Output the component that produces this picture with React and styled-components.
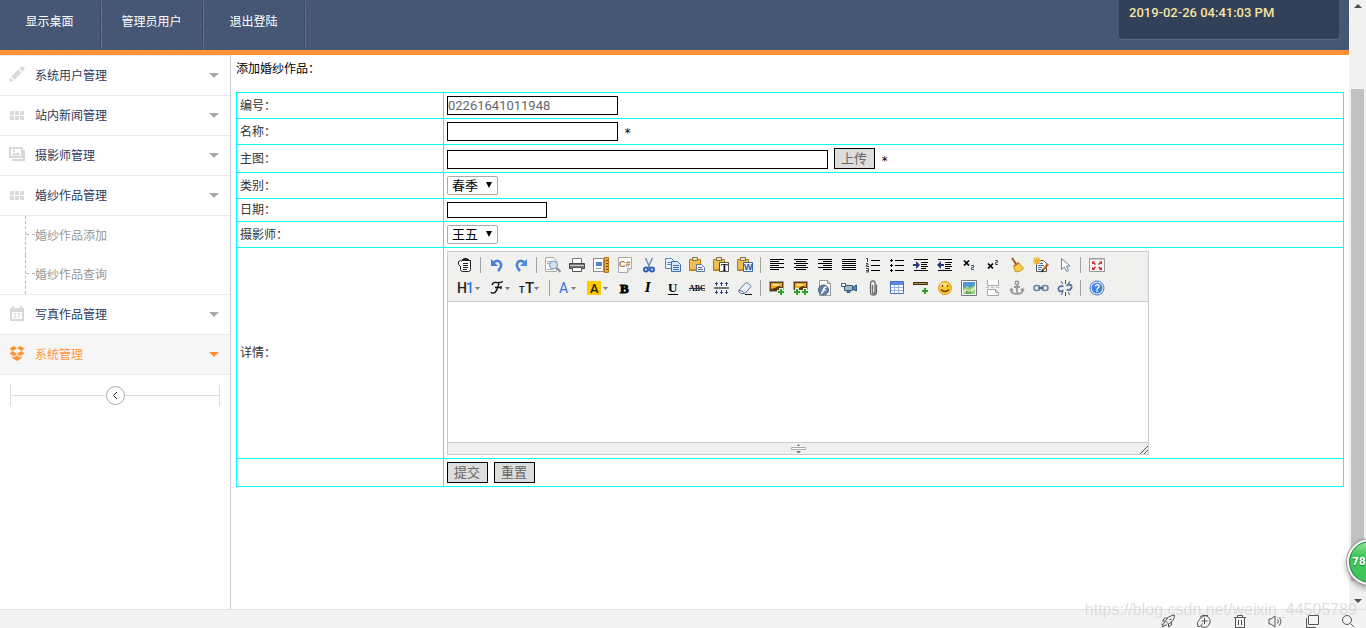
import React from 'react';
import styled, { createGlobalStyle, css } from 'styled-components';

const GlobalStyle = createGlobalStyle`
  * {
    box-sizing: border-box;
  }
  body {
    margin: 0;
    overflow: hidden;
    background: #fff;
    font-family: "Liberation Sans", "Noto Sans CJK SC", sans-serif;
    font-size: 12px;
    color: #333;
  }
  button, input, select, textarea {
    font-family: inherit;
    margin: 0;
  }
  ul {
    list-style: none;
    margin: 0;
    padding: 0;
  }
`;

// Page shell
const Shell = styled.div`
  display: flex;
  flex-direction: column;
  height: 100vh;
  overflow: hidden;
`;

const Viewport = styled.div`
  display: flex;
  flex: 1;
  min-height: 0;
`;

const Page = styled.div`
  display: flex;
  flex-direction: column;
  flex: 1;
  min-width: 0;
`;

// Header
const Header = styled.header`
  display: flex;
  justify-content: space-between;
  height: 55px;
  border-bottom: 5px solid #ff9334;
  background-color: #445674;
  background-image: repeating-linear-gradient(
    135deg,
    rgba(255, 255, 255, 0.03) 0 1px,
    transparent 1px 2px,
    rgba(20, 30, 60, 0.04) 2px 3px
  );
`;

const Nav = styled.nav`
  display: flex;
`;

const NavLink = styled.a`
  width: 102px;
  padding: 13px 2px 0 0;
  border-right: 1px solid #5d6e8c;
  box-shadow: inset -1px 0 0 #3a4a67;
  color: #fff;
  line-height: 18px;
  text-align: center;
  text-decoration: none;
`;

const Clock = styled.div`
  width: 220px;
  height: 39px;
  margin-right: 10px;
  padding: 3px 10px;
  border-radius: 0 0 3px 3px;
  background: #324059;
  box-shadow: 0 1px 0 #56678a;
  color: #f5e3a1;
  font-family: Roboto, sans-serif;
  font-size: 13px;
  font-weight: 500;
  line-height: 20px;
`;

const Columns = styled.div`
  display: flex;
  flex: 1;
  min-height: 0;
`;

// Sidebar
const Sidebar = styled.aside`
  flex: none;
  width: 231px;
  border-right: 1px solid #ccc;
`;

const Menu = styled.ul`
  border-bottom: 1px solid #ebebeb;
`;

const MenuLink = styled.a`
  display: flex;
  align-items: center;
  gap: 10px;
  height: 40px;
  padding: 0 11px 3px 9px;
  border-top: 1px solid #ebebeb;
  background: ${(props) => (props.$active ? '#f6f6f6' : '#fff')};
  color: ${(props) => (props.$active ? '#ff9334' : '#2b3a5b')};
  text-decoration: none;

  svg {
    flex: none;
    color: ${(props) => (props.$active ? '#ff9334' : '#d8d8d8')};
  }
`;

const Caret = styled.i`
  margin-left: auto;
  margin-top: 3px;
  border: 5px solid transparent;
  border-top-color: ${(props) => (props.$active ? '#ff9334' : '#aaa')};
  border-bottom: 0;
`;

const SubMenu = styled.ul`
  border-top: 1px solid #ebebeb;
`;

const SubLink = styled.a`
  display: flex;
  align-items: center;
  height: 39px;
  margin-left: 25px;
  padding-bottom: 2px;
  border-left: 1px dashed #bbb;
  color: #999;
  text-decoration: none;

  &::before {
    content: '';
    width: 9px;
    border-top: 1px dashed #bbb;
  }
`;

const Collapse = styled.div`
  display: flex;
  align-items: center;
  height: 21px;
  margin: 10px;
  border: solid #ddd;
  border-width: 0 1px;

  &::before,
  &::after {
    content: '';
    flex: 1;
    height: 1px;
    background: #ddd;
  }
`;

const CollapseButton = styled.button`
  display: flex;
  align-items: center;
  justify-content: center;
  width: 19px;
  height: 19px;
  padding: 0;
  border: 1px solid #aaa;
  border-radius: 50%;
  background: #fff;
`;

// Form
const Content = styled.main`
  flex: 1;
  min-width: 0;
  padding: 6px 5px 5px;
`;

const Title = styled.h1`
  margin: 0 0 15px;
  color: #000;
  font-size: 12px;
  font-weight: 400;
  line-height: 16px;
`;

const FormTable = styled.table`
  width: 100%;
  table-layout: fixed;
  border-collapse: collapse;

  th,
  td {
    padding: 3px;
    border: 1px solid #0ff;
    font-weight: 400;
    text-align: left;
  }
  th {
    width: 18.7%;
    padding: 0 3px;
    line-height: 16px;
  }
`;

const Field = styled.div`
  display: flex;
  align-items: flex-end;
  gap: 6px;
`;

const Star = styled.span`
  color: #000;
  font-family: "DejaVu Sans Mono", monospace;
  line-height: 16px;
`;

const TextInput = styled.input`
  width: ${(props) => props.$width}px;
  height: ${(props) => props.$height || 19}px;
  padding: 0;
  border: 1px solid #000;
  border-radius: 0;
  background: #fff;
  color: #666;
  font-family: Roboto, "Noto Sans CJK SC", sans-serif;
  font-size: 13px;
  line-height: 16px;
`;

const FormButton = styled.button`
  height: 21px;
  padding: 0 7px 0 6px;
  border: 1px solid #000;
  border-radius: 0;
  background: #ddd;
  color: #666;
  font-size: 13px;
  line-height: 18px;
`;

const SelectBox = styled.div`
  display: grid;
  align-items: center;
  width: 51px;

  &::after {
    content: '';
    grid-area: 1 / 1;
    justify-self: end;
    margin: 0 6px 2px 0;
    border: 3px solid transparent;
    border-top: 6px solid #000;
    border-bottom: 0;
    pointer-events: none;
  }
`;

const Select = styled.select`
  grid-area: 1 / 1;
  width: 100%;
  height: 19px;
  padding: 1px 4px 0;
  appearance: none;
  border: 1px solid #a9a9a9;
  border-radius: 2px;
  background: #fff;
  color: #000;
  font-size: 13px;
  line-height: 16px;
`;

// Rich text editor
const EditorBox = styled.div`
  max-width: 702px;
  border: 1px solid #ccc;
`;

const Toolbar = styled.div`
  display: flex;
  flex-direction: column;
  gap: 1px;
  padding: 2px 5px;
  border-bottom: 1px solid #ccc;
  background: #f0f0ee;
`;

const ToolRow = styled.div`
  display: flex;
  align-items: center;
  height: 22px;
`;

const Tool = styled.button`
  display: flex;
  align-items: center;
  justify-content: center;
  flex: none;
  width: ${(props) => props.$width || 24}px;
  height: 20px;
  padding: 0;
  border: 0;
  background: none;
`;

const Separator = styled.i`
  width: 1px;
  height: 16px;
  margin: 0 4px 0 3px;
  background: #a0a0a0;
`;

const EditArea = styled.textarea`
  display: block;
  width: 100%;
  height: 140px;
  padding: 5px;
  border: 0;
  outline: 0;
  resize: none;
`;

const StatusBar = styled.div`
  display: grid;
  grid-template-columns: 1fr auto 1fr;
  align-items: end;
  height: 12px;
  border-top: 1px solid #ccc;
  background: #f0f0ee;

  svg:last-child {
    justify-self: end;
  }
`;

// Browser scrollbar and bottom bar
const ScrollTrack = styled.div`
  display: flex;
  flex-direction: column;
  align-items: center;
  flex: none;
  width: 17px;
  padding: 4px 0 6px;
  background: #f1f1f1;
`;

const ScrollArrow = styled.i`
  border: 4px solid transparent;
  ${(props) =>
    props.$up
      ? css`
          border-top: 0;
          border-bottom-color: #505050;
        `
      : css`
          border-bottom: 0;
          border-top-color: #505050;
        `}
`;

const ScrollThumb = styled.div`
  flex: 1;
  width: 13px;
  margin: 81px 0 18px;
  background: #c1c1c1;
`;

const BottomBar = styled.footer`
  display: flex;
  justify-content: flex-end;
  gap: 20px;
  height: 19px;
  padding: 3px 10px 0;
  border-top: 1px solid #e3e3e3;
  background: #f3f3f3;
  overflow: hidden;
`;

const BarButton = styled.button`
  flex: none;
  width: 16px;
  height: 16px;
  padding: 0;
  border: 0;
  background: none;
  color: #555;

  svg {
    display: block;
  }
`;

const SpeedBall = styled.div`
  position: fixed;
  right: -27px;
  bottom: 43px;
  width: 46px;
  height: 46px;
  padding-left: 3px;
  border: 2px solid #f2f2f2;
  border-radius: 50%;
  background: linear-gradient(#9be29b, #41c75a 35%, #3fc458);
  box-shadow: 0 0 0 1px #999, inset 0 0 0 1px #1f7d4d, 0 3px 6px rgba(0, 0, 0, 0.4);
  color: #fff;
  font: bold 10px/42px "DejaVu Sans", sans-serif;
  text-shadow: 0 1px 1px #1d7a35;
`;

const Watermark = styled.div`
  position: fixed;
  right: 9px;
  bottom: 8px;
  color: rgba(200, 200, 200, 0.55);
  font-size: 16px;
  line-height: 20px;
  pointer-events: none;
`;

const Svg = ({ w = 16, h = 16, children }) => (
  <svg width={w} height={h} viewBox={`0 0 ${w} ${h}`} fill="none" aria-hidden="true">
    {children}
  </svg>
);

// Sidebar icons
const menuIcons = {
  pencil: (
    <path
      fill="currentColor"
      d="M0 16l1.300-4.500 3.200 3.200zM2.300 10.500l7-7 3.200 3.200-7 7zM10.300 2.500l1.700-1.700q1-1 2 0l1.200 1.200q1 1 0 2l-1.700 1.700z"
    />
  ),
  grid: (
    <path fill="currentColor" d="M1 5h4v4H1zM6 5h4v4H6zM11 5h4v4h-4zM1 10h4v4H1zM6 10h4v4H6zM11 10h4v4h-4z" />
  ),
  photos: (
    <>
      <path stroke="currentColor" strokeWidth="2" d="M1 2h12v9H1zM3 14h12V4" />
      <path fill="currentColor" d="M3 9.500l2-3 2 1.500 2-2 2.500 3.500zM4 4h2v2H4z" />
    </>
  ),
  calendar: (
    <>
      <path stroke="currentColor" strokeWidth="2" d="M2 4h12v11H2z" />
      <path fill="currentColor" d="M1 3h14v4H1zM3 1h2v3H3zM11 1h2v3h-2z" />
      <text x="4" y="13" fontSize="7" fontWeight="bold" fill="currentColor">17</text>
    </>
  ),
  box: (
    <path
      fill="currentColor"
      d="M5 1l3 2.200-4.500 2.800L.5 3.600zM11 1l4.500 2.600-3 2.400L8 3.200zM.5 8.500l3-2.500L8 8.800l-3 2.400zM15.500 8.500l-3-2.500L8 8.800l3 2.400zM3 11.200l2 1.200 3-2.200 3 2.200 2-1.200v1.600L8 16l-5-3.200z"
    />
  ),
};

const dropArrow = (x) => <path fill="#777" d={`M${x} 7h5l-2.500 3z`} />;
const clipboard = (
  <>
    <path fill="#f0bd52" stroke="#b27a1c" d="M.5 2.500h11v11H.5z" />
    <path fill="#c98c2c" d="M1 12h6v1.500H1z" />
    <path fill="#ece6cc" stroke="#807040" d="M3.500.500h5v3h-5z" />
  </>
);
const picture = (
  <>
    <path fill="#5a3512" stroke="#a0a0a0" d="M.5 1.500h14v10H.5z" />
    <path fill="#f9a91c" d="M2 3h11v4l-4-1-3 2-4 1z" />
    <path fill="#fce38a" d="M4 4h6v2H4z" />
  </>
);
const plus = (x, y) => (
  <>
    <path stroke="#e4f5e0" strokeWidth="4" d={`M${x - 4} ${y}h8M${x} ${y - 4}v8`} />
    <path stroke="#2f9e2f" strokeWidth="2" d={`M${x - 3} ${y}h6M${x} ${y - 3}v6`} />
  </>
);
const sheet = <path fill="#f8f8f6" stroke="#999" d="M2.500.500h8l3 3v12h-11zM10.500.500v3h3" />;

// Editor toolbar icons, drawn on a 16px grid
const toolIcons = {
  source: (
    <>
      <path fill="#fff" stroke="#222" d="M4.500 3.500h9v9q0 2-2 2h-6q-2 0-2-2V9" />
      <path stroke="#222" d="M5 2.500h7M6.500 1.500h4M1.500 4.500l2-1 1 1M1.500 4.500v3l2 2M6 6.500h5M6 8.500h5M6 10.500h5M6 12.500h4" />
    </>
  ),
  undo: (
    <>
      <path stroke="#4a7fd6" strokeWidth="2.500" d="M4 6q4-4 7-1 3 4-2 9" />
      <path fill="#4a7fd6" d="M2 2v7h7z" />
    </>
  ),
  redo: (
    <>
      <path stroke="#4a7fd6" strokeWidth="2.500" d="M12 6Q8 2 5 5q-3 4 2 9" />
      <path fill="#4a8ee6" d="M14 2v7H7z" />
    </>
  ),
  preview: (
    <>
      <path fill="#fafafa" stroke="#aaa" d="M.5.500h8l3 3v11H.5zM2 4.500h4M2 6.500h3M2 12.500h6" />
      <circle cx="8.500" cy="8" r="4" fill="#cfe2f6" stroke="#7893b5" />
      <path stroke="#8d8d9a" strokeWidth="2" d="M12 11l3.500 4" />
    </>
  ),
  print: (
    <>
      <path fill="#fff" stroke="#777" d="M3.500 1.500h9v5h-9z" />
      <path fill="#777" stroke="#444" d="M.5 6.500h15v5H.5z" />
      <path stroke="#ccc" d="M1 8.500h14" />
      <path fill="#fff" stroke="#555" d="M3.500 10.500h9v4h-9z" />
    </>
  ),
  template: (
    <>
      <path fill="#fff" stroke="#222" strokeDasharray="1 1" d="M.5 1.500h10v13H.5z" />
      <path fill="#4d86cc" d="M3 5h6v4H3z" />
      <path stroke="#999" d="M3 11.500h5" />
      <path fill="#e9a93a" stroke="#b87717" d="M11.500.500h4v15h-4z" />
      <path stroke="#7a4b08" d="M13 3.500h2M13 6.500h2M13 9.500h2M13 12.500h2" />
    </>
  ),
  code: (
    <>
      <path fill="#fbfbf9" stroke="#aaa" d="M1.500.500h13v11l-4 4h-9z" />
      <path fill="#ddd" stroke="#aaa" d="M10.500 15.500v-4h4" />
      <text x="2" y="10" fontSize="9" fontWeight="bold" fill="#a4713c">C#</text>
    </>
  ),
  cut: (
    <>
      <path stroke="#6f8fb8" strokeWidth="1.500" d="M4.500 1l4.500 10M11.500 1L7 11" />
      <circle cx="5" cy="12.500" r="2" stroke="#2e62b5" strokeWidth="2" />
      <circle cx="11" cy="12.500" r="2" stroke="#2e62b5" strokeWidth="2" />
    </>
  ),
  copy: (
    <>
      <path fill="#e8f0fc" stroke="#5c87c8" d="M.5 1.500h6l2 2v8h-8zM2 5.500h4M2 7.500h4" />
      <path fill="#dbe8fb" stroke="#3a6cb8" d="M6.500 4.500h6l3 3v7h-9zM8 8.500h6M8 10.500h6M8 12.500h6" />
    </>
  ),
  paste: (
    <>
      {clipboard}
      <path fill="#eef3fb" stroke="#63779a" d="M7.500 7.500h5l3 3v4h-8zM9 10.500h4M9 12.500h5" />
    </>
  ),
  plainpaste: (
    <>
      {clipboard}
      <path fill="#fff" stroke="#555" d="M6.500 5.500h9v9h-9z" />
      <text x="8" y="14" fontSize="10" fontWeight="bold" fontFamily="Liberation Serif" fill="#000">T</text>
    </>
  ),
  wordpaste: (
    <>
      {clipboard}
      <path fill="#eaf2fd" stroke="#3668b0" d="M6.500 5.500h9v9h-9z" />
      <text x="7" y="13" fontSize="9" fontWeight="bold" fill="#215bb0">W</text>
    </>
  ),
  left: <path stroke="#000" d="M1 2.500h14M1 4.500h9M1 6.500h14M1 8.500h9M1 10.500h14M1 12.500h9" />,
  center: <path stroke="#000" d="M1 2.500h14M3 4.500h10M1 6.500h14M3 8.500h10M1 10.500h14M3 12.500h10" />,
  right: <path stroke="#000" d="M1 2.500h14M6 4.500h9M1 6.500h14M6 8.500h9M1 10.500h14M6 12.500h9" />,
  full: <path stroke="#000" d="M1 2.500h14M1 4.500h14M1 6.500h14M1 8.500h14M1 10.500h14M1 12.500h14" />,
  ol: (
    <>
      <path stroke="#000" d="M6 3.500h9M6 8.500h9M6 13.500h9" />
      <path stroke="#444" d="M1 1.500h1.500V5M1 6.500h2v1.500H1.500v1.500H4M1 11.500h2.500v3.500H1M1 13.500h2" />
    </>
  ),
  ul: <path stroke="#000" d="M6 3.500h9M6 8.500h9M6 13.500h9M1 3.500h3M2.500 2v3M1 8.500h3M2.500 7v3M1 13.500h3M2.500 12v3" />,
  indent: (
    <>
      <path stroke="#000" d="M1 2.500h14M8 5.500h7M8 7.500h6M8 9.500h7M8 11.500h5M1 13.500h14" />
      <path fill="#233c78" d="M0 7h3V4l4 4-4 4V9H0z" />
    </>
  ),
  outdent: (
    <>
      <path stroke="#000" d="M1 2.500h14M8 5.500h7M8 7.500h6M8 9.500h7M8 11.500h5M1 13.500h14" />
      <path fill="#233c78" d="M7 7H4V4L0 8l4 4V9h3z" />
    </>
  ),
  sub: (
    <>
      <path stroke="#000" strokeWidth="1.700" d="M3 3.500l5 5M8 3.500l-5 5" />
      <path stroke="#33548e" d="M10 8.500h2.500v2h-2v2H13" />
    </>
  ),
  sup: (
    <>
      <path stroke="#000" strokeWidth="1.700" d="M3 6.500l5 5M8 6.500l-5 5" />
      <path stroke="#33548e" d="M10 3.500h2.500v2h-2v2H13" />
    </>
  ),
  clear: (
    <>
      <path stroke="#a5571c" strokeWidth="2" d="M3 1l4 6" />
      <path fill="#f7cf45" stroke="#cf9520" d="M4.500 9l5-3.500 5 6q-3 3.500-8 3.500z" />
      <path stroke="#c44" strokeWidth="1.500" d="M5 9l4.500-3" />
    </>
  ),
  quickformat: (
    <>
      <path fill="#fff" stroke="#555" d="M3.500 3.500h7l3 3v8h-10z" />
      <path stroke="#3c6dbd" d="M5 6.500h5M5 8.500h6M5 10.500h4M5 12.500h3" />
      <path stroke="#f2b32a" strokeWidth="1.500" d="M4 0v8M0 4h8M1 1l6 6M7 1L1 7" />
      <path stroke="#c46b1d" strokeWidth="2.500" d="M15 7l-5 6" />
      <path stroke="#222" strokeWidth="1.500" d="M10 12.500L8.500 15" />
    </>
  ),
  pointer: <path fill="#fff" stroke="#6f85ab" d="M4.500 1.500v11l3-2.500 2 4.500 2-1-2-4.500h3.500z" />,
  fullscreen: (
    <>
      <path fill="#f8f4f4" stroke="#999" d="M.5 1.500h15v13H.5z" />
      <path fill="#ccc" d="M1 2h14v1H1z" />
      <path stroke="#c22" strokeWidth="1.500" d="M3.500 5l3 2.500M12.500 5l-3 2.500M3.500 12.500l3-2.500M12.500 12.500l-3-2.500" />
      <path fill="#c22" d="M3 4.500h3l-3 3zM13 4.500h-3l3 3zM3 13h3l-3-3zM13 13h-3l3-3z" />
    </>
  ),
  heading: (
    <>
      <text x="0" y="13" fontSize="14" fontFamily="Roboto" fontWeight="500" fill="#222">H</text>
      <text x="9" y="13" fontSize="14" fontFamily="Roboto" fontWeight="500" fill="#2f73e0">1</text>
      {dropArrow(18)}
    </>
  ),
  fontname: (
    <>
      <path stroke="#111" strokeWidth="1.300" d="M2 5q1-3 4-2.500 4 .5 7-1M9 3Q7 12 4 13q-2.500.5-3-1M5 7.500h6M11 6v3" />
      {dropArrow(15)}
    </>
  ),
  fontsize: (
    <>
      <text x="0" y="13" fontSize="9" fontWeight="bold" fontFamily="Roboto" fill="#222">T</text>
      <text x="6" y="13" fontSize="15" fontFamily="Roboto" fontWeight="500" fill="#222">T</text>
      {dropArrow(15)}
    </>
  ),
  forecolor: (
    <>
      <text x="1" y="13" fontSize="14" fontFamily="Roboto" fill="#2f73e0">A</text>
      {dropArrow(13)}
    </>
  ),
  hilite: (
    <>
      <rect x="1" y="1" width="14" height="14" rx="1" fill="#fc0" />
      <text x="4" y="13" fontSize="13" fontFamily="Roboto" fontWeight="500" fill="#222">A</text>
      {dropArrow(17)}
    </>
  ),
  bold: <text x="3" y="13" fontSize="13" fontWeight="bold" fontFamily="Liberation Serif" fill="#000" stroke="#000">B</text>,
  italic: (
    <text x="4" y="12" fontSize="12" fontWeight="bold" fontStyle="italic" fontFamily="DejaVu Serif" fill="#000">I</text>
  ),
  underline: (
    <>
      <text x="3" y="12" fontSize="13" fontWeight="bold" fontFamily="Liberation Serif" fill="#000">U</text>
      <path stroke="#000" d="M3 14.500h10" />
    </>
  ),
  strike: (
    <>
      <text x="0" y="11" fontSize="8" fontWeight="bold" fontFamily="Liberation Serif" fill="#000">ABC</text>
      <path stroke="#335" d="M0 8.500h16" />
    </>
  ),
  lineheight: (
    <>
      <path stroke="#777" strokeWidth="2" d="M1 8h15" />
      <path stroke="#32486f" d="M3.500 2v4M8.500 2v4M13.500 2v4M2 3.500h3M7 3.500h3M12 3.500h3M3.500 10v4M8.500 10v4M13.500 10v4M2 12.500h3M7 12.500h3M12 12.500h3" />
    </>
  ),
  eraser: (
    <>
      <path fill="#eef3fb" stroke="#5d7299" d="M2 10l6.500-7q1-.8 2 0l3 2.500q.8.800 0 1.500L8 13.500H4L2 12z" />
      <path stroke="#5d7299" d="M2 10.500q3-.5 5.500 2.500" />
      <path stroke="#111" d="M8 14.500h7" />
    </>
  ),
  image: (
    <>
      {picture}
      {plus(12, 12)}
    </>
  ),
  multiimage: (
    <>
      {picture}
      {plus(4, 12)}
      {plus(12, 12)}
    </>
  ),
  flash: (
    <>
      {sheet}
      <circle cx="6.500" cy="10" r="5" fill="#6584a8" stroke="#40607f" />
      <path stroke="#fff" strokeWidth="1.500" d="M4 13q2 0 2.500-3T9.500 7M5.500 10h3" />
    </>
  ),
  media: (
    <>
      <path fill="#9db7cf" stroke="#3e5c78" d="M3.500 5.500h8v5h-8z" />
      <path fill="#fff" stroke="#3e5c78" d="M.5 3.500h4v3h-4z" />
      <path fill="#48c" stroke="#3e5c78" d="M12 7l3.500-2v6L12 9.500zM6 10.500h3v2H6z" />
    </>
  ),
  file: (
    <path stroke="#6a6a6a" strokeWidth="1.300" d="M11.500 4.500v7.500q0 3-3 3t-3-3V4q0-3 2.500-3T10 4v8q0 1.300-1.300 1.300T7.500 12V5" />
  ),
  table: (
    <>
      <path fill="#fff" stroke="#4a6fb5" d="M1.500 1.500h13v12h-13z" />
      <path fill="#5b8ae0" d="M2 2h12v3H2z" />
      <path stroke="#9cb6e4" d="M2 7.500h12M2 10.500h12M5.500 5v8M9.500 5v8" />
    </>
  ),
  hr: (
    <>
      <path fill="#b98f54" stroke="#3c2a12" d="M.5 2.500h14v2H.5z" />
      {plus(12, 11)}
    </>
  ),
  emoticons: (
    <>
      <circle cx="8" cy="8" r="6.500" fill="#fbc52c" stroke="#e29a1c" />
      <ellipse cx="7" cy="5" rx="4" ry="2" fill="#fde68a" />
      <path stroke="#6b3d08" strokeWidth="1.300" d="M5.500 5v2M10.500 5v2M4 9.500q4 4 8 0" />
    </>
  ),
  map: (
    <>
      <path fill="#fff" stroke="#777" d="M.5.500h15v15H.5z" />
      <path fill="#9fd07c" d="M2 2h12v12H2z" />
      <path fill="#4f9ad6" d="M2 2h12v3l-5 3-3-2-4 3z" />
      <path fill="#e9f2d6" d="M2 11l3-2 3 2 6-4v2l-6 4-3-2-3 2z" />
      <path fill="#6aac4a" d="M5 10l3 2 2-1.500V14H5z" />
    </>
  ),
  pagebreak: (
    <>
      <path fill="#fdfdfd" stroke="#aaa" d="M2.500 0v5.500h11V0M2.500 15.500v-6h8l3 3v3zM10.500 9.500v3h3" />
      <path stroke="#bbb" d="M1 7.500h3M6 7.500h3M11 7.500h3" />
    </>
  ),
  anchor: (
    <>
      <circle cx="8" cy="3" r="1.700" stroke="#999" strokeWidth="1.500" />
      <path stroke="#999" strokeWidth="1.800" d="M8 5v9M5 7h6M2 9q0 5 6 5 6 0 6-5M1 10.500L2.500 9 4 10.500M12 10.500L13.500 9 15 10.500" />
    </>
  ),
  link: (
    <>
      <rect x="1" y="5.500" width="6" height="5" rx="2.500" stroke="#6a80a8" strokeWidth="1.600" />
      <rect x="9" y="5.500" width="6" height="5" rx="2.500" stroke="#6a80a8" strokeWidth="1.600" />
      <path stroke="#465f8d" strokeWidth="1.500" d="M5 8h6" />
    </>
  ),
  unlink: (
    <>
      <path stroke="#5f77a3" strokeWidth="1.800" d="M6.500 6.500Q3 5 1.500 8q-.5 3 2 3.500 2 0 3-1.500M9.500 9.500q3.500 1.500 5-1.500.5-3-2-3.500-2 0-3 1.500" />
      <path stroke="#46546e" d="M8.500 0v4M4 1l2 3M13 1l-2 3M8.500 12v4M4 15l2-3M13 15l-2-3" />
    </>
  ),
  help: (
    <>
      <circle cx="8" cy="8" r="7" fill="#fff" stroke="#3b70c8" />
      <circle cx="8" cy="8" r="5.500" fill="#3f7fe0" />
      <text x="5" y="12" fontSize="10" fontWeight="bold" fontFamily="Liberation Sans" fill="#fff">?</text>
    </>
  ),
};

const toolRows = [
  ['source', '|', 'undo', 'redo', '|', 'preview', 'print', 'template', 'code', 'cut', 'copy', 'paste',
    'plainpaste', 'wordpaste', '|', 'left', 'center', 'right', 'full', 'ol', 'ul', 'indent', 'outdent',
    'sub', 'sup', 'clear', 'quickformat', 'pointer', '|', 'fullscreen'],
  ['heading', 'fontname', 'fontsize', '|', 'forecolor', 'hilite', 'bold', 'italic', 'underline', 'strike',
    'lineheight', 'eraser', '|', 'image', 'multiimage', 'flash', 'media', 'file', 'table', 'hr',
    'emoticons', 'map', 'pagebreak', 'anchor', 'link', 'unlink', '|', 'help'],
];

// Tools that carry a drop-down arrow are wider than 16px
const toolWidths = { heading: 25, fontname: 21, fontsize: 23, forecolor: 20, hilite: 23 };

const menu = [
  { text: '系统用户管理', icon: 'pencil' },
  { text: '站内新闻管理', icon: 'grid' },
  { text: '摄影师管理', icon: 'photos' },
  { text: '婚纱作品管理', icon: 'grid', children: ['婚纱作品添加', '婚纱作品查询'] },
  { text: '写真作品管理', icon: 'calendar' },
  { text: '系统管理', icon: 'box', active: true },
];

const barIcons = [
  {
    name: '加速',
    icon: (
      <path d="M5.500 8q2-5 9-6 0 6-6 9zM5.500 8H2.500l2-3H8M8.500 11v3l3-2V8.500M4.500 9L2 14l5-2.500M2 10.500v1.500M9.500 6.500h2" />
    ),
  },
  {
    name: '浏览器',
    icon: <path d="M4 4a6 6 0 1 1 1 9.500M2 14Q0 9 4 5.500T12 2.500M2 14q4-1 4.500-3.500M5.500 8h6M8.500 5v6" />,
  },
  { name: '清理', icon: <path d="M2 4.500h12M5.500 4V2.500h5V4M3.500 4.500v10h9v-10M6.500 7v5M9.500 7v5" /> },
  { name: '声音', icon: <path d="M1 6v5h2l4 3V3L3 6zM9.500 6.500q1.500 2 0 4M11.500 4.500q3 4 0 8" /> },
  { name: '窗口', icon: <path d="M5 2.500h9.500v9H4.500v-9M2.500 5v9.500H12" /> },
  {
    name: '搜索',
    icon: (
      <>
        <circle cx="7" cy="7" r="4.500" />
        <path d="M10.500 10.500L14 14" />
      </>
    ),
  },
];

const Editor = () => (
  <EditorBox>
    <Toolbar>
      {toolRows.map((row, r) => (
        <ToolRow key={r}>
          {row.map((name, i) =>
            name === '|' ? (
              <Separator key={i} />
            ) : (
              <Tool key={name} type="button" aria-label={name} $width={(toolWidths[name] || 16) + 8}>
                <Svg w={toolWidths[name] || 16}>{toolIcons[name]}</Svg>
              </Tool>
            )
          )}
        </ToolRow>
      ))}
    </Toolbar>
    <EditArea id="detail" />
    <StatusBar>
      <span />
      <Svg w={15} h={11}>
        <path fill="#777" d="M6 3h3L7.500 1zM5 8h5l-2.500 2.500z" />
        <path fill="#fff" stroke="#aaa" d="M.5 4.500h14v2H.5z" />
      </Svg>
      <Svg w={8} h={8}>
        <path stroke="#555" d="M0 8l8-8M4 8l4-4" />
      </Svg>
    </StatusBar>
  </EditorBox>
);

const DropDown = ({ id, value }) => (
  <SelectBox>
    <Select id={id} defaultValue={value}>
      <option>{value}</option>
    </Select>
  </SelectBox>
);

const Row = ({ label, id, children }) => (
  <tr>
    <th scope="row">
      <label htmlFor={id}>{label}</label>
    </th>
    <td>{children}</td>
  </tr>
);

const WorkForm = () => (
  <form onSubmit={(e) => e.preventDefault()}>
    <FormTable>
      <tbody>
        <Row label="编号：" id="number">
          <Field>
            <TextInput id="number" $width={171} defaultValue="02261641011948" />
          </Field>
        </Row>
        <Row label="名称：" id="name">
          <Field>
            <TextInput id="name" $width={171} />
            <Star>*</Star>
          </Field>
        </Row>
        <Row label="主图：" id="picture">
          <Field>
            <TextInput id="picture" $width={381} />
            <FormButton type="button">上传</FormButton>
            <Star>*</Star>
          </Field>
        </Row>
        <Row label="类别：" id="category">
          <DropDown id="category" value="春季" />
        </Row>
        <Row label="日期：" id="date">
          <Field>
            <TextInput id="date" $width={100} $height={16} />
          </Field>
        </Row>
        <Row label="摄影师：" id="photographer">
          <DropDown id="photographer" value="王五" />
        </Row>
        <Row label="详情：" id="detail">
          <Editor />
        </Row>
        <tr>
          <th />
          <td>
            <Field>
              <FormButton type="submit">提交</FormButton>
              <FormButton type="reset">重置</FormButton>
            </Field>
          </td>
        </tr>
      </tbody>
    </FormTable>
  </form>
);

const SideMenu = () => (
  <Sidebar>
    <Menu>
      {menu.map((item) => (
        <li key={item.text}>
          <MenuLink href="#" $active={item.active}>
            <Svg>{menuIcons[item.icon]}</Svg>
            {item.text}
            <Caret $active={item.active} />
          </MenuLink>
          {item.children && (
            <SubMenu>
              {item.children.map((child) => (
                <li key={child}>
                  <SubLink href="#">{child}</SubLink>
                </li>
              ))}
            </SubMenu>
          )}
        </li>
      ))}
    </Menu>
    <Collapse>
      <CollapseButton type="button" aria-label="收起">
        <Svg w={7} h={9}>
          <path stroke="#222" d="M5 1L1.500 4.500 5 8" />
        </Svg>
      </CollapseButton>
    </Collapse>
  </Sidebar>
);

const App = () => (
  <>
    <GlobalStyle />
    <Shell>
      <Viewport>
        <Page>
          <Header>
            <Nav>
              <NavLink href="#">显示桌面</NavLink>
              <NavLink href="#">管理员用户</NavLink>
              <NavLink href="#">退出登陆</NavLink>
            </Nav>
            <Clock>2019-02-26 04:41:03 PM</Clock>
          </Header>
          <Columns>
            <SideMenu />
            <Content>
              <Title>添加婚纱作品：</Title>
              <WorkForm />
            </Content>
          </Columns>
        </Page>
        <ScrollTrack>
          <ScrollArrow $up />
          <ScrollThumb />
          <ScrollArrow />
        </ScrollTrack>
      </Viewport>
      <BottomBar>
        {barIcons.map((item) => (
          <BarButton key={item.name} type="button" aria-label={item.name}>
            <Svg>
              <g stroke="currentColor">{item.icon}</g>
            </Svg>
          </BarButton>
        ))}
      </BottomBar>
    </Shell>
    <SpeedBall>78</SpeedBall>
    <Watermark>https://blog.csdn.net/weixin_44505789</Watermark>
  </>
);

export default App;
